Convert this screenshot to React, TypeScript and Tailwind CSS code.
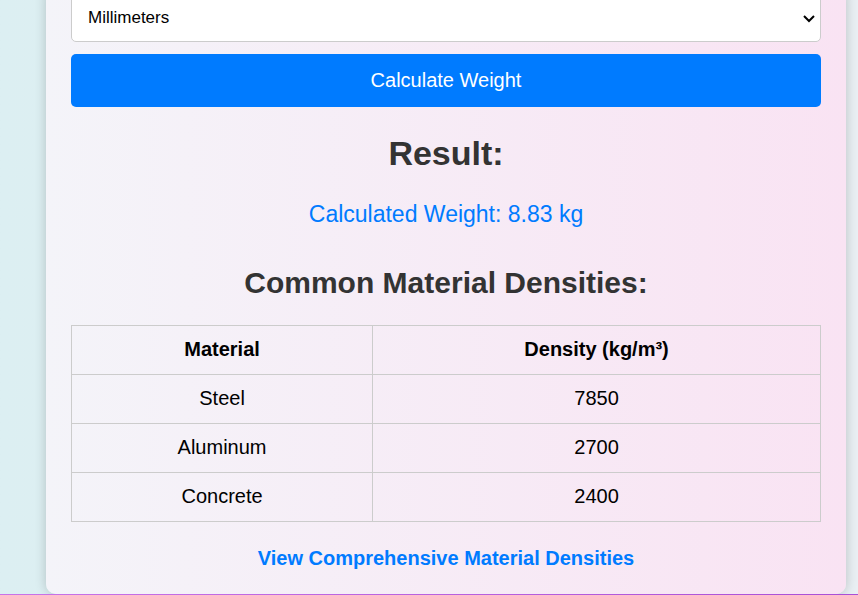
import { useState } from "react";

const materials = [
  { name: "Steel", density: 7850 },
  { name: "Aluminum", density: 2700 },
  { name: "Concrete", density: 2400 },
];

export default function App() {
  const [unit, setUnit] = useState("mm");

  return (
    <div className="font-['Liberation_Sans',Arial,sans-serif] text-black">
      <div className="overflow-hidden bg-linear-to-r from-[#dceff2] to-[#e9eff3] pr-3 pl-[46px]">
        <main className="max-w-[800px] rounded-b-[10px] bg-linear-to-r from-[#f4f4f9] to-[#f9e3f3] px-[25px] pb-[22px] text-center shadow-[0_0_12px_rgba(0,0,0,0.2)]">
          <div className="relative -mt-2">
            <select
              aria-label="Unit"
              value={unit}
              onChange={(e) => setUnit(e.target.value)}
              className="block h-[50px] w-full appearance-none rounded-[5px] border border-[#cccccc] bg-white px-4 pt-0.5 text-[17px]"
            >
              <option value="mm">Millimeters</option>
              <option value="cm">Centimeters</option>
              <option value="m">Meters</option>
            </select>
            <svg
              aria-hidden="true"
              viewBox="0 0 12 8"
              className="pointer-events-none absolute top-[23px] right-[6px] h-2 w-3"
              fill="none"
              stroke="black"
              strokeWidth="2"
            >
              <path d="M1 1l5 5 5-5" />
            </svg>
          </div>
          <button
            type="button"
            className="mt-3 block h-[53px] w-full rounded-[5px] bg-[#007bff] pb-0.5 text-xl text-white"
          >
            Calculate Weight
          </button>

          <h2 className="mt-[26px] text-[34px] leading-10 font-bold text-[#333333]">Result:</h2>
          <p className="mt-[25px] text-[23px] leading-8 text-[#007bff]">Calculated Weight: 8.83 kg</p>

          <h3 className="mt-[33px] text-[30px] leading-10 font-bold text-[#333333]">
            Common Material Densities:
          </h3>
          <table className="mt-[22px] w-full table-fixed border-collapse text-xl leading-6">
            <thead>
              <tr>
                <th scope="col" className="w-[40.2%] border border-[#cccccc] px-3 pt-[11px] pb-[13px] font-bold">
                  Material
                </th>
                <th scope="col" className="border border-[#cccccc] px-3 pt-[11px] pb-[13px] font-bold">
                  Density (kg/m³)
                </th>
              </tr>
            </thead>
            <tbody>
              {materials.map((m) => (
                <tr key={m.name}>
                  <td className="border border-[#cccccc] px-3 pt-[11px] pb-[13px]">{m.name}</td>
                  <td className="border border-[#cccccc] px-3 pt-[11px] pb-[13px]">{m.density}</td>
                </tr>
              ))}
            </tbody>
          </table>

          <p className="mt-[22px] text-xl leading-7">
            <a href="#densities" className="font-bold text-[#007bff]">
              View Comprehensive Material Densities
            </a>
          </p>
        </main>
      </div>
      <div className="h-px bg-linear-to-r from-[#c873e8] to-[#a94fd6]" />
    </div>
  );
}
